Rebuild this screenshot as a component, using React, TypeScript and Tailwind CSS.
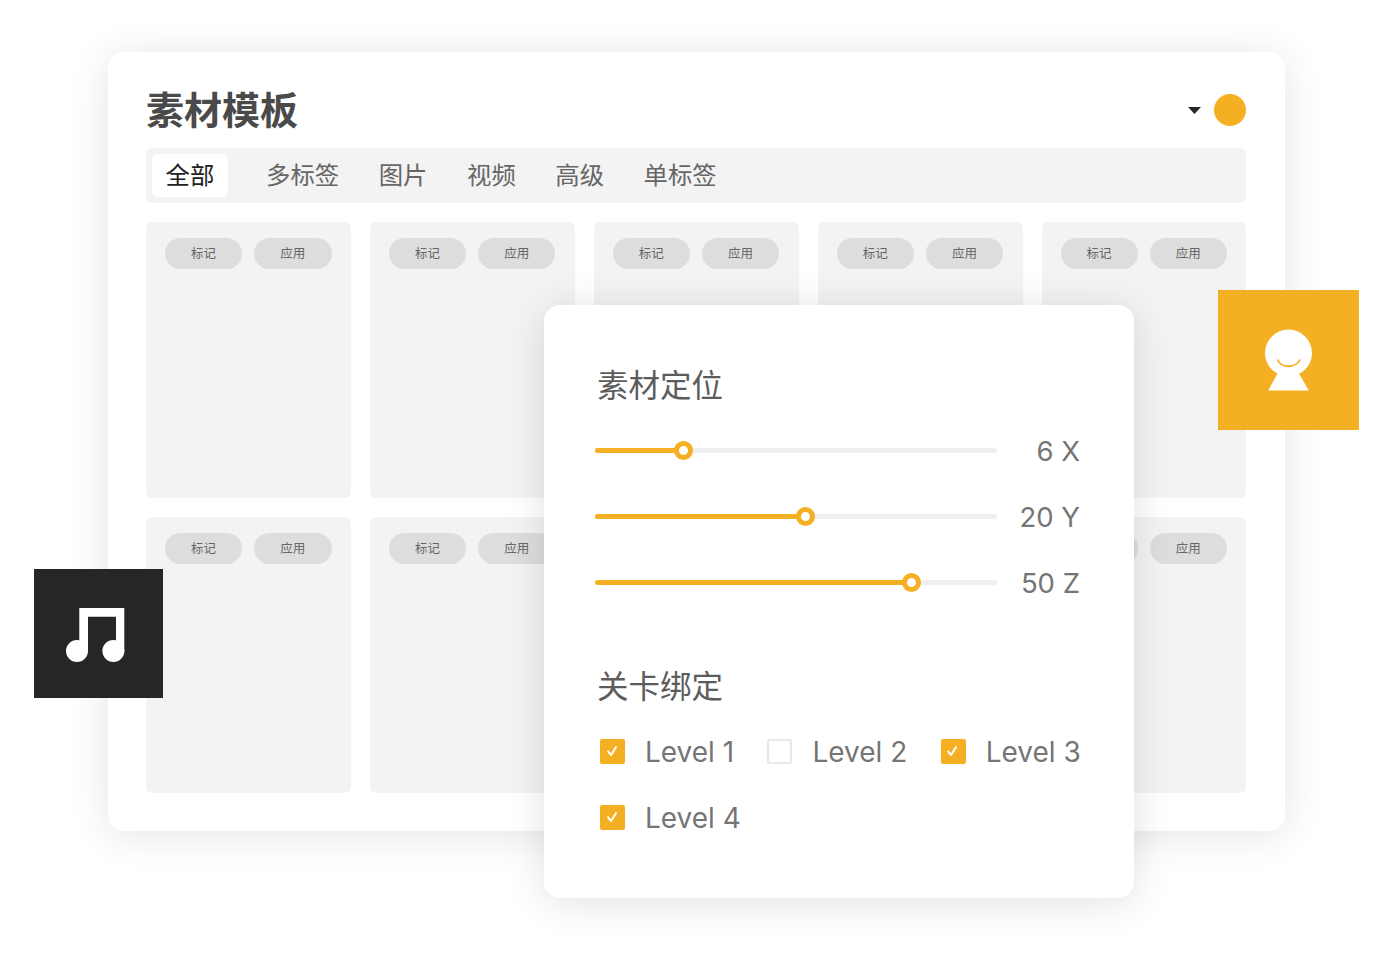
const FONT = "font-['Inter','Noto_Sans_CJK_SC',sans-serif]";

const TABS = ["全部", "多标签", "图片", "视频", "高级", "单标签"];
const SLIDERS = [
  { label: "6 X", pos: 88 },
  { label: "20 Y", pos: 210 },
  { label: "50 Z", pos: 316 },
];
const LEVELS = [
  { label: "Level 1", checked: true },
  { label: "Level 2", checked: false },
  { label: "Level 3", checked: true },
  { label: "Level 4", checked: true },
];

function TemplateCard() {
  return (
    <div className="h-[276px] rounded-[6px] bg-[#f3f3f3] pt-4 pl-[19px]">
      <div className="flex gap-3">
        <span className="flex h-[31px] w-[77px] items-center justify-center rounded-full bg-[#dddddd] pt-[2px] text-[12.5px] text-[#666666]">
          标记
        </span>
        <span className="flex h-[31px] w-[77.5px] items-center justify-center rounded-full bg-[#dddddd] pt-[2px] text-[12.5px] text-[#666666]">
          应用
        </span>
      </div>
    </div>
  );
}

function Slider({ label, pos }: { label: string; pos: number }) {
  return (
    <div className="flex h-[66px] w-[485px] items-center justify-between">
      <div className="relative h-[5px] w-[402px] rounded-full bg-[#efefef]">
        <div className="h-full rounded-full bg-[#f5af23]" style={{ width: pos }} />
        <div
          className="absolute top-[-7px] ml-[-9.5px] h-[19px] w-[19px] rounded-full border-[5px] border-[#f5af23] bg-white"
          style={{ left: pos }}
        />
      </div>
      <span className="pt-[3px] text-[27.5px] leading-none text-[#757575]">{label}</span>
    </div>
  );
}

function Level({ label, checked }: { label: string; checked: boolean }) {
  return (
    <div className="flex h-[66px] items-center gap-5">
      {checked ? (
        <span className="flex h-[25px] w-[25px] items-center justify-center rounded-[2px] bg-[#f5af23] pr-[2px]">
          <svg width="10" height="10" viewBox="0 0 10 10" fill="none">
            <path d="M.5 4.5 4 9 9.5 .5" stroke="#fff" strokeWidth="2" />
          </svg>
        </span>
      ) : (
        <span className="h-[25px] w-[25px] rounded-[2px] border-2 border-[#e8e8e8] bg-white" />
      )}
      <span className="pt-[2px] text-[28px] leading-none text-[#757575]">{label}</span>
    </div>
  );
}

export default function App() {
  return (
    <div className={`relative h-[960px] w-[1392px] overflow-hidden bg-white ${FONT}`}>
      {/* main window */}
      <div className="ml-[108px] pt-[52px]">
        <div className="h-[779px] w-[1177px] rounded-[16px] bg-white pt-[34px] pr-[38.55px] pl-[38px] shadow-[0_4px_40px_rgba(0,0,0,0.11)]">
          <div className="flex h-[48px] items-center justify-between">
            <h1 className="text-[38px] leading-none font-bold text-[#4a4a4a]">素材模板</h1>
            <div className="flex items-center gap-[13px]">
              <svg width="13" height="7" viewBox="0 0 13 7">
                <path d="M0 0H13L6.5 7Z" fill="#262626" />
              </svg>
              <span className="h-8 w-8 rounded-full bg-[#f5af23]" />
            </div>
          </div>
          <div className="mt-[14px] flex h-[55px] items-center gap-[39.5px] rounded-[6px] bg-[#f3f3f3] pl-[6px]">
            {TABS.map((tab, i) => (
              <span
                key={tab}
                className={`flex h-[43px] items-center rounded-[6px] text-[24.4px] ${
                  i === 0 ? "mr-[-1.5px] w-[76px] justify-center bg-white text-[#222222]" : "text-[#666666]"
                }`}
              >
                {tab}
              </span>
            ))}
          </div>
          <div className="mt-[19px] grid grid-cols-5 gap-[19px]">
            {Array.from({ length: 10 }).map((_, i) => (
              <TemplateCard key={i} />
            ))}
          </div>
        </div>
      </div>

      {/* floating settings panel */}
      <div className="absolute top-[305px] left-[544px] h-[593px] w-[590px] rounded-[16px] bg-white pt-[59px] pl-[51px] shadow-[0_4px_40px_rgba(0,0,0,0.12)]">
        <h2 className="ml-[2px] text-[31.5px] leading-[44px] text-[#5c5c5c]">素材定位</h2>
        <div className="mt-[9px]">
          {SLIDERS.map((s) => (
            <Slider key={s.label} label={s.label} pos={s.pos} />
          ))}
        </div>
        <h2 className="mt-[50px] ml-[2px] text-[31.5px] leading-[44px] text-[#5c5c5c]">关卡绑定</h2>
        <div className="mt-[9px] ml-[5px] flex w-[490px] flex-wrap gap-x-[33.3px]">
          {LEVELS.map((l) => (
            <Level key={l.label} label={l.label} checked={l.checked} />
          ))}
        </div>
      </div>

      {/* orange tile */}
      <div className="absolute top-[290px] left-[1218px] flex h-[140px] w-[141px] items-center justify-center bg-[#f5af23]">
        <svg width="141" height="140" viewBox="0 0 141 140">
          <path d="M59.5 83.5 50.3 100.5H90.7L81 83.5Z" fill="#fff" />
          <circle cx="70.5" cy="63" r="23.5" fill="#fff" />
          <path d="M59.5 69.5C63 78.5 78 78.5 82 69.5" fill="none" stroke="#f5af23" strokeWidth="1.8" />
        </svg>
      </div>

      {/* music tile */}
      <div className="absolute top-[568.5px] left-[34px] flex h-[129px] w-[129px] items-center justify-center bg-[#262626]">
        <svg width="129" height="129" viewBox="0 0 129 129">
          <path d="M45.3 82V39H90.3V82H82V47.7H54V82Z" fill="#fff" />
          <circle cx="43" cy="82" r="11" fill="#fff" />
          <circle cx="79.4" cy="82" r="11" fill="#fff" />
        </svg>
      </div>
    </div>
  );
}
